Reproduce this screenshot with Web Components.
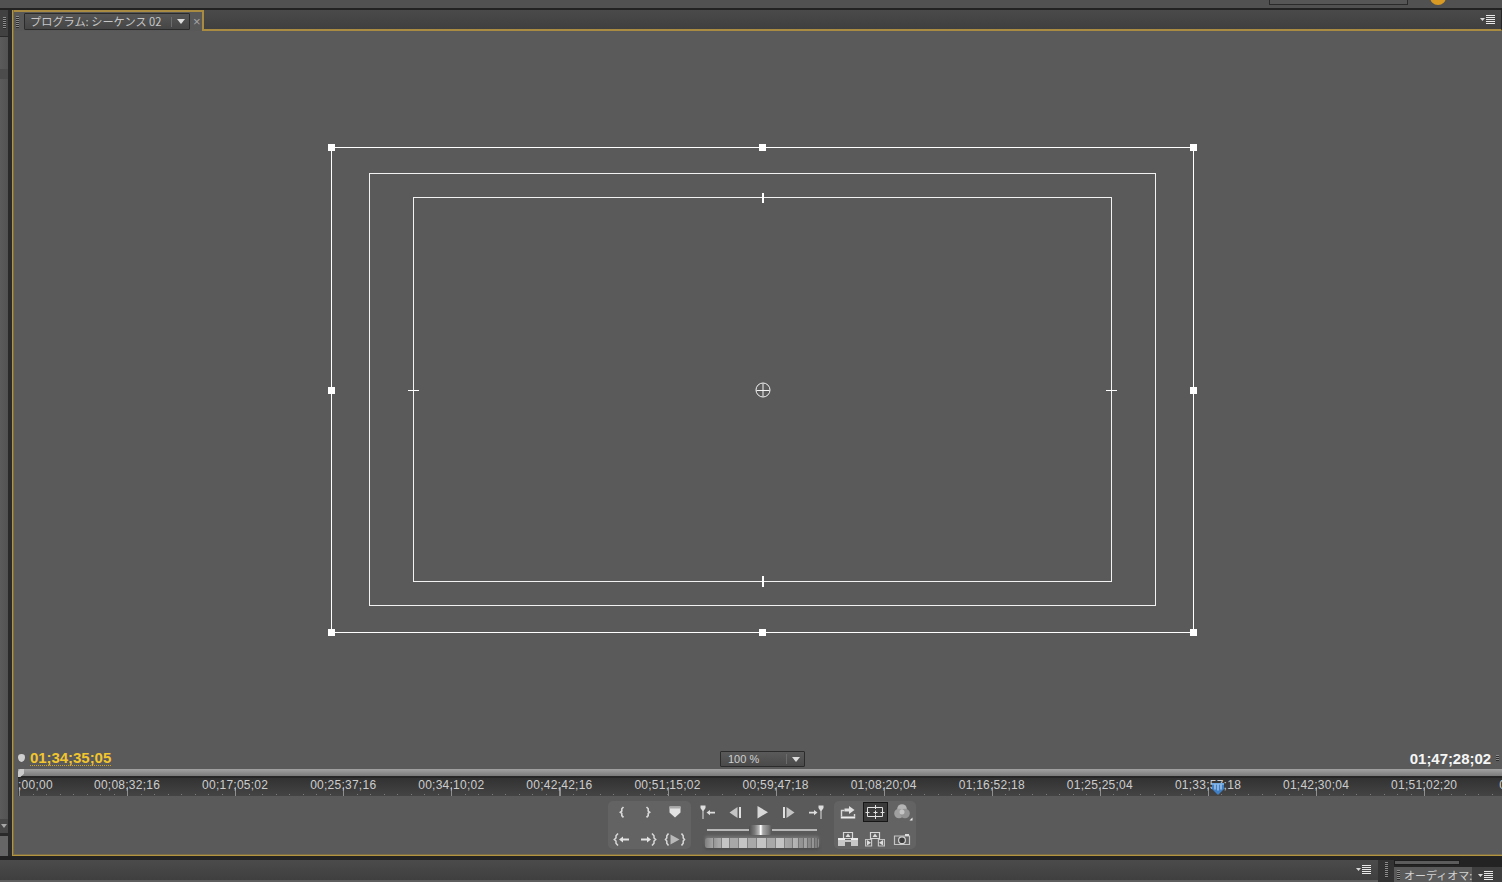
<!DOCTYPE html>
<html lang="ja">
<head>
<meta charset="utf-8">
<title>プログラム: シーケンス 02</title>
<style>
  html, body { margin: 0; padding: 0; background: #232323; overflow: hidden; }
</style>
</head>
<body>
<pr-app></pr-app>

<script>
const ICONS = {
  'mark-in': '<path d="M11.500 5 9.800 6.800V9L8.300 10.200 9.800 11.400v2.200l1.700 1.800" fill="none" stroke="#d8d8d8" stroke-width="1.600"/>',
  'mark-out': '<path d="M8.500 5l1.700 1.800V9l1.500 1.200-1.500 1.200v2.200l-1.700 1.800" fill="none" stroke="#d8d8d8" stroke-width="1.600"/>',
  'marker': '<path d="M4.500 4.500h11v6L10 15.500l-5.500-5z" fill="#e2e2e2"/><path d="M4.500 4.500h11v2h-11z" fill="#a8a8a8"/>',
  'go-in': '<path d="M2.500 3.500h5v2.500L5.500 9v8H4.500V9L2.500 6z" fill="#ddd"/><path d="M8.500 10.500 12 8v1.700h5v1.800h-5v1.700z" fill="#ddd"/>',
  'step-back': '<path d="M12.500 5v11L4.500 10.500z" fill="#c4c4c4"/><path d="M14 5h2v11h-2z" fill="#e0e0e0"/>',
  'play': '<path d="M5.500 4v12.500L16 10.200z" fill="#d8d8d8"/>',
  'step-fwd': '<path d="M7.500 5v11l8-5.500z" fill="#c4c4c4"/><path d="M4 5h2v11H4z" fill="#e0e0e0"/>',
  'go-out': '<path d="M17.500 3.500h-5v2.500l2 3v8h1V9l2-3z" fill="#ddd"/><path d="M11.500 10.500 8 8v1.700H3v1.800h5v1.700z" fill="#ddd"/>',
  'clear-in': '<path d="M6 4.500 4 6.800V9L2.300 10.500 4 12v2.200L6 16.500" fill="none" stroke="#d8d8d8" stroke-width="1.500"/><path d="M7 10.500 11 7.500v2h6v2h-6v2z" fill="#e2e2e2"/>',
  'clear-out': '<path d="M14 4.500l2 2.300V9l1.700 1.500L16 12v2.200l-2 2.300" fill="none" stroke="#d8d8d8" stroke-width="1.500"/><path d="M13 10.500 9 7.500v2H3v2h6v2z" fill="#e2e2e2"/>',
  'play-io': '<path d="M3.500 4.500 1.800 6.800V9L.5 10.500 1.800 12v2.200l1.700 2.300M16.500 4.500l1.700 2.300V9l1.300 1.500-1.300 1.500v2.200l-1.700 2.300" fill="none" stroke="#d8d8d8" stroke-width="1.500"/><path d="M5.500 5.500v10l9-5z" fill="#b8b8b8"/>',
  'loop': '<path d="M3.500 14.500V8.500h3M16.500 12v2.500" fill="none" stroke="#d8d8d8" stroke-width="1.400"/><path d="M6.500 6.500h4.500V4l5.500 4-5.500 4V9.500H6.500z" fill="#e0e0e0"/><path d="M2.800 14.500h14.400v2H2.800z" fill="#eee"/>',
  'safe': '<path d="M2.500 5.500h15v9h-15z" fill="none" stroke="#e2e2e2"/><path d="M10.500 3v4M10.500 13v4M.5 10.500h4M15.500 10.500h4M8.500 10.500h4M10.500 8.500v4" fill="none" stroke="#e2e2e2"/>',
  'output': '<circle cx="10" cy="7" r="4.800" fill="#b4b4b4"/><circle cx="7" cy="11.500" r="4.800" fill="#a0a0a0"/><circle cx="13" cy="11.500" r="4.800" fill="#949494"/><circle cx="10" cy="10" r="2.500" fill="#c4c4c4"/><path d="M20.500 15.500v3h-3z" fill="#eee"/>',
  'lift': '<path d="M5.500 3.500h9v6h-9z" fill="none" stroke="#d8d8d8" stroke-width="1.200"/><path d="M10 4.500 12.500 8h-5z" fill="#ddd"/><path d="M0 9h7v2h6V9h7v8h-7v-4H7v4H0z" fill="#c8c8c8"/><path d="M0 9h7v2H0zM13 9h7v2h-7z" fill="#ececec"/>',
  'extract': '<path d="M5.500 3.500h9v6h-9z" fill="none" stroke="#d8d8d8" stroke-width="1.200"/><path d="M10 4.500 12.500 8h-5z" fill="#ddd"/><path d="M.6 10.500h6v6.500h-6zM13.400 10.500h6v6.500h-6z" fill="none" stroke="#c4c4c4" stroke-width="1.200"/><path d="M6 13.700 2 11v5.500zM14 13.700l4-2.700v5.500z" fill="#ddd"/>',
  'camera': '<path d="M2.500 7h15v8.500h-15z" fill="none" stroke="#c4c4c4" stroke-width="1.200"/><path d="M13 5h4v2h-4z" fill="#ddd"/><circle cx="10" cy="11.200" r="3.400" fill="#3c3c3c" stroke="#d4d4d4" stroke-width="1.200"/>'
};

class PrIcon extends HTMLElement {
  connectedCallback() {
    const name = this.getAttribute('name');
    this.attachShadow({ mode: 'open' });
    this.shadowRoot.innerHTML = `
      <style>
        :host { display: flex; align-items: center; justify-content: center; width: 20px; height: 20px; justify-self: center; align-self: center; }
        :host([active]) { width: 25px; height: 20px; background: #3a3a3a; border: 1px solid #161616; box-sizing: border-box; }
        svg { display: block; width: 20px; height: 20px; flex: none; overflow: visible; }
      </style>
      <svg viewBox="0 0 20 20">${ICONS[name]}</svg>
    `;
  }
}

class PrMenuIcon extends HTMLElement {
  connectedCallback() {
    this.attachShadow({ mode: 'open' });
    this.shadowRoot.innerHTML = `
      <style>
        :host { display: block; width: 15px; height: 9px; flex: none; }
        svg { display: block; }
      </style>
      <svg width="15" height="9" viewBox="0 0 15 9">
        <path d="M0 3h5L2.500 6z" fill="#d8d8d8"/>
        <path d="M6 .5h9M6 2.500h9M6 4.500h9M6 6.500h9M6 8.500h9" stroke="#e8e8e8" stroke-width="1"/>
      </svg>
    `;
  }
}

class PrGrip extends HTMLElement {
  connectedCallback() {
    this.attachShadow({ mode: 'open' });
    this.shadowRoot.innerHTML = `
      <style>
        :host {
          display: block; width: 3px; height: var(--grip-h, 10px); flex: none;
          background: repeating-linear-gradient(to bottom, #8d8d8d 0 1px, #2c2c2c 1px 2px);
        }
      </style>
    `;
  }
}

class PrDropdown extends HTMLElement {
  connectedCallback() {
    this.attachShadow({ mode: 'open' });
    this.shadowRoot.innerHTML = `
      <style>
        :host {
          display: flex; align-items: center; box-sizing: border-box; height: 16px;
          background: linear-gradient(#5a5a5a, #4a4a4a);
          border: 1px solid #2b2b2b; border-radius: 1px;
          font: 11px "Liberation Sans", "Noto Sans CJK JP", sans-serif;
          color: #cfcfcf;
        }
        .label { flex: 1; white-space: nowrap; overflow: hidden; padding-bottom: var(--label-lift, 0); line-height: 14px; }
        .divider { width: 1px; height: 10px; background: #6c6c6c; }
        .arrow { width: 0; height: 0; border-left: 4px solid transparent; border-right: 4px solid transparent; border-top: 5px solid #dcdcdc; }
      </style>
      <span class="label"><slot></slot></span>
      <span class="divider"></span>
      <span class="arrow"></span>
    `;
  }
}

class PrPanelHeader extends HTMLElement {
  connectedCallback() {
    this.attachShadow({ mode: 'open' });
    this.shadowRoot.innerHTML = `
      <style>
        :host { display: flex; height: 21px; flex: none; background: linear-gradient(#4a4a4a, #3e3e3e); }
        .well {
          display: flex; align-items: center; box-sizing: border-box; width: 190px;
          background: #585858; border-top: 2px solid #a98c42; border-right: 2px solid #a98c42;
          padding-left: 2px; gap: 5px;
        }
        pr-grip { --grip-h: 12px; }
        pr-dropdown {
          width: 166px; height: 17px; padding: 0 4px 0 5px; gap: 5px; --label-lift: 2px;
          font-family: "Noto Sans CJK JP", "Liberation Sans", sans-serif;
          font-size: 11.2px; color: #c6c6c6;
          background: linear-gradient(#565656, #454545);
        }
        .close { font: 13px "Liberation Sans", sans-serif; color: #a4a4a4; margin-left: -2px; line-height: 1; }
        .rest {
          flex: 1; display: flex; align-items: center; justify-content: flex-end;
          box-sizing: border-box; border-bottom: 2px solid #a98c42;
          border-right: 1px solid #262626; padding-right: 6px;
        }
      </style>
      <div class="well">
        <pr-grip></pr-grip>
        <pr-dropdown><slot></slot></pr-dropdown>
        <span class="close">×</span>
      </div>
      <div class="rest"><pr-menu-icon></pr-menu-icon></div>
    `;
  }
}

// safe area guides, drawn in the coordinates of the monitor canvas
class PrSafeFrame extends HTMLElement {
  connectedCallback() {
    const handles = [];
    for (const x of [331, 762, 1193]) {
      for (const y of [147, 390, 632]) {
        if (x === 762 && y === 390) continue;
        handles.push(`<rect x="${x - 3}" y="${y - 3}" width="7" height="7" fill="#fff" stroke="none"/>`);
      }
    }
    this.attachShadow({ mode: 'open' });
    this.shadowRoot.innerHTML = `
      <style>
        :host { display: block; width: 880px; height: 500px; flex: none; }
        svg { display: block; }
      </style>
      <svg width="880" height="500" viewBox="323 140 880 500" fill="none" stroke="#f2f2f2" stroke-width="1">
        <rect x="331.500" y="147.500" width="862" height="485" stroke="#fff"/>
        <rect x="369.500" y="173.500" width="786" height="432"/>
        <rect x="413.500" y="197.500" width="698" height="384"/>
        <path d="M763 193v10M763 576v11" stroke-width="2" stroke="#fff"/>
        <path d="M408 390.500h11M1106 390.500h11" stroke="#fff"/>
        <circle cx="763" cy="390" r="7"/>
        <path d="M763 383.500v13M756.500 390.500h13"/>
        ${handles.join('')}
      </svg>
    `;
  }
}

class PrRuler extends HTMLElement {
  connectedCallback() {
    const labels = (this.getAttribute('labels') || '').split(' ');
    this.attachShadow({ mode: 'open' });
    this.shadowRoot.innerHTML = `
      <style>
        :host { display: block; flex: none; margin-left: 4px; position: relative; overflow: hidden; }
        .bar { height: 7px; background: linear-gradient(#a2a2a2, #7a7a7a); border-bottom: 2px solid #262626; }
        .handle { position: absolute; left: 0; top: 0; width: 6px; height: 8px; background: #c9c9c9; clip-path: polygon(30% 0, 100% 0, 100% 60%, 40% 100%, 0 100%, 0 30%); }
        .scale {
          height: 18px; position: relative;
          background:
            repeating-linear-gradient(to right, #8f8f8f 0 1px, transparent 1px 108.1px) 1px 9px / 100% 9px no-repeat,
            repeating-linear-gradient(to right, #7c7c7c 0 1px, transparent 1px 13.51px) 1px 16px / 100% 1px no-repeat,
            linear-gradient(#323232, #444);
        }
        .labels {
          display: flex; white-space: nowrap;
          font: 12px/14px "Liberation Sans", sans-serif; letter-spacing: .25px; color: #cdcdcd;
        }
        .labels span { flex: none; width: 108.1px; text-align: center; }
        .labels span:first-child { width: 55px; text-align: left; }
        .labels span:last-child { text-align: left; padding-left: 21px; box-sizing: border-box; }
        .cti { position: absolute; left: 1194px; top: 5px; }
      </style>
      <div class="bar"></div>
      <div class="handle"></div>
      <div class="scale">
        <div class="labels">${labels.map(t => `<span>${t}</span>`).join('')}</div>
        <svg class="cti" width="12" height="12" viewBox="0 0 12 12">
          <path d="M0 0h12v6L6 12 0 6z" fill="#3f7fc6"/>
          <path d="M0 0h12v2H0z" fill="#6fa6de"/>
          <path d="M3 1.500v5M6 1.500v6M9 1.500v5" stroke="#d6e6f8" stroke-width="1"/>
        </svg>
      </div>
    `;
  }
}

class PrTransport extends HTMLElement {
  connectedCallback() {
    // shuttle cells get narrower towards the right of the strip
    const cells = [9, 8, 8, 9, 9, 9, 10, 9, 9, 8, 6, 5, 4, 4, 3, 3, 3, 3, 3];
    let x = 0;
    const stops = cells.map((w, i) => {
      const c = i % 2 ? '#a8a8a8' : '#c4c4c4';
      const s = `${c} ${x}px ${x + w - 1}px, #808080 ${x + w - 1}px ${x + w}px`;
      x += w;
      return s;
    }).join(', ');
    this.attachShadow({ mode: 'open' });
    this.shadowRoot.innerHTML = `
      <style>
        :host { display: flex; justify-content: center; flex: none; height: 58px; box-sizing: border-box; padding: 5px 0 0 8px; background: #5a5a5a; }
        .group { display: grid; height: 48px; box-sizing: border-box; background: #636363; border-radius: 5px; grid-template-rows: 22px 20px; row-gap: 6px; }
        .left { width: 83px; grid-template-columns: 27px 26px 27px; }
        .right { width: 82px; grid-template-columns: 27px 28px 25px; }
        .center { width: 143px; box-sizing: border-box; padding-right: 1px; display: flex; flex-direction: column; align-items: center; }
        .steps { display: grid; grid-template-columns: repeat(5, 27px); height: 22px; align-items: center; }
        .jog { position: relative; width: 110px; height: 2px; margin-top: 6px; background: #b8b8b8; }
        .thumb {
          position: absolute; left: 42px; top: -4px; width: 23px; height: 10px; border-radius: 3px;
          background: linear-gradient(to right, #4e4e4e, #7c7c7c 25%, #bdbdbd 45%, #fff 48%, #fff 52%, #a8a8a8 60%, #7c7c7c 85%, #555);
        }
        .shuttle {
          width: 114px; height: 10px; margin-top: 7px; border-radius: 2px;
          box-shadow: 0 -2px 3px #747474, 0 2px 3px #4c4c4c;
          background:
            linear-gradient(to right, rgba(70,70,70,.55), rgba(70,70,70,0) 12%, rgba(70,70,70,0) 70%, rgba(70,70,70,.45)),
            linear-gradient(to right, ${stops});
        }
      </style>
      <div class="group left">
        <pr-icon name="mark-in"></pr-icon>
        <pr-icon name="mark-out"></pr-icon>
        <pr-icon name="marker"></pr-icon>
        <pr-icon name="clear-in"></pr-icon>
        <pr-icon name="clear-out"></pr-icon>
        <pr-icon name="play-io"></pr-icon>
      </div>
      <div class="center">
        <div class="steps">
          <pr-icon name="go-in"></pr-icon>
          <pr-icon name="step-back"></pr-icon>
          <pr-icon name="play"></pr-icon>
          <pr-icon name="step-fwd"></pr-icon>
          <pr-icon name="go-out"></pr-icon>
        </div>
        <div class="jog"><div class="thumb"></div></div>
        <div class="shuttle"></div>
      </div>
      <div class="group right">
        <pr-icon name="loop"></pr-icon>
        <pr-icon name="safe" active></pr-icon>
        <pr-icon name="output"></pr-icon>
        <pr-icon name="lift"></pr-icon>
        <pr-icon name="extract"></pr-icon>
        <pr-icon name="camera"></pr-icon>
      </div>
    `;
  }
}

class PrProgramPanel extends HTMLElement {
  connectedCallback() {
    this.attachShadow({ mode: 'open' });
    this.shadowRoot.innerHTML = `
      <style>
        :host {
          display: flex; flex-direction: column; flex: 1; min-width: 0; box-sizing: border-box;
          background: #5a5a5a; padding: 0 0 1px 1px;
          border-left: 1px solid #b3953f; border-bottom: 1px solid #b3953f;
          box-shadow: inset 1px 0 0 #7b6e4c, inset 0 -1px 0 #7b6e4c;
        }
        .monitor { flex: 1; min-height: 0; display: flex; align-items: center; justify-content: center; padding-left: 10px; }
        .times { display: grid; grid-template-columns: 706px 85px 1fr; height: 20px; flex: none; align-items: center; }
        .current { display: flex; align-items: center; gap: 5px; padding: 0 0 2px 4px; }
        .pin { width: 7px; height: 8px; background: #cfcfcf; border-radius: 50% 50% 50% 50% / 40% 40% 60% 60%; }
        .tc { font: bold 15px "Liberation Sans", sans-serif; letter-spacing: -.05px; }
        .tc.now { color: #f2c52e; border-bottom: 1px dotted #c9a02a; line-height: 15px; }
        .tc.end { color: #f6f6f6; }
        .duration { display: flex; align-items: center; justify-content: flex-end; gap: 5px; padding: 0 3px 2px 0; }
        pr-dropdown { padding: 0 4px 0 7px; gap: 5px; }
        pr-grip { --grip-h: 6px; }
      </style>
      <pr-panel-header>プログラム: シーケンス 02</pr-panel-header>
      <div class="monitor"><pr-safe-frame></pr-safe-frame></div>
      <div class="times">
        <div class="current"><span class="pin"></span><span class="tc now">01;34;35;05</span></div>
        <pr-dropdown>100 %</pr-dropdown>
        <div class="duration"><span class="tc end">01;47;28;02</span><pr-grip></pr-grip></div>
      </div>
      <pr-ruler labels=";00;00 00;08;32;16 00;17;05;02 00;25;37;16 00;34;10;02 00;42;42;16 00;51;15;02 00;59;47;18 01;08;20;04 01;16;52;18 01;25;25;04 01;33;57;18 01;42;30;04 01;51;02;20 0"></pr-ruler>
      <pr-transport></pr-transport>
    `;
  }
}

class PrLeftRail extends HTMLElement {
  connectedCallback() {
    this.attachShadow({ mode: 'open' });
    this.shadowRoot.innerHTML = `
      <style>
        :host { display: flex; flex-direction: column; width: 12px; flex: none; box-sizing: border-box; border-right: 4px solid #2a2a2a; background: #565656; }
        .top { height: 26px; background: #414141; display: flex; justify-content: center; align-items: center; border-bottom: 1px solid #2a2a2a; }
        .fill { flex: 1; background: linear-gradient(to right, #5b5b5b, #535353); }
        .notch { height: 10px; margin-top: 32px; background: #4c4c4c; }
        .arrow { height: 14px; background: #484848; border-bottom: 3px solid #2a2a2a; display: flex; justify-content: center; align-items: center; }
        .arrow span { width: 0; height: 0; border-left: 3px solid transparent; border-right: 3px solid transparent; border-top: 4px solid #a8a8a8; }
        .foot { height: 20px; background: #666; }
        pr-grip { --grip-h: 12px; }
      </style>
      <div class="top"><pr-grip></pr-grip></div>
      <div class="fill"><div class="notch"></div></div>
      <div class="arrow"><span></span></div>
      <div class="foot"></div>
    `;
  }
}

class PrBottomBar extends HTMLElement {
  connectedCallback() {
    this.attachShadow({ mode: 'open' });
    this.shadowRoot.innerHTML = `
      <style>
        :host { display: flex; height: 26px; flex: none; background: #232323; padding-top: 4px; box-sizing: border-box; }
        .strip {
          flex: 1; display: flex; align-items: flex-start; justify-content: flex-end; box-sizing: border-box;
          padding: 5px 7px 0 0; background: linear-gradient(#4b4b4b, #3f3f3f); border-bottom: 2px solid #5e5e5e;
        }
        .sash { width: 16px; display: flex; justify-content: center; padding-top: 2px; background: #333; box-sizing: border-box; }
        .sash pr-grip { --grip-h: 16px; }
        .audio { width: 108px; display: flex; flex-direction: column; }
        .mini { width: 66px; height: 5px; background: #5c5c5c; box-sizing: border-box; border: 1px solid #1d1d1d; flex: none; }
        .tabs { flex: 1; display: flex; align-items: center; margin-top: 2px; background: #3f3f3f; }
        .tab {
          width: 78px; height: 100%; display: flex; align-items: center; gap: 4px; padding-left: 3px; box-sizing: border-box; overflow: hidden;
          background: #5a5a5a; white-space: nowrap; color: #d2d2d2;
          font: 11px "Noto Sans CJK JP", "Liberation Sans", sans-serif;
        }
        .tabs pr-menu-icon { margin-left: 6px; }
        .tab pr-grip { --grip-h: 10px; }
      </style>
      <div class="strip"><pr-menu-icon></pr-menu-icon></div>
      <div class="sash"><pr-grip></pr-grip></div>
      <div class="audio">
        <div class="mini"></div>
        <div class="tabs">
          <div class="tab"><pr-grip></pr-grip>オーディオマ:</div>
          <pr-menu-icon></pr-menu-icon>
        </div>
      </div>
    `;
  }
}

class PrApp extends HTMLElement {
  connectedCallback() {
    this.attachShadow({ mode: 'open' });
    this.shadowRoot.innerHTML = `
      <style>
        :host { display: flex; flex-direction: column; width: 1502px; height: 882px; overflow: hidden; background: #232323; }
        .top { height: 10px; box-sizing: border-box; flex: none; display: flex; background: #515151; border-bottom: 2px solid #222; overflow: hidden; }
        .field { width: 139px; height: 5px; margin-left: 1269px; box-sizing: border-box; border: 1px solid #2a2a2a; border-top: none; background: #565656; }
        .dot { width: 16px; height: 16px; margin: -11px 0 0 22px; border-radius: 50%; background: #d89a22; }
        .main { flex: 1; min-height: 0; display: flex; }
      </style>
      <div class="top"><div class="field"></div><div class="dot"></div></div>
      <div class="main">
        <pr-left-rail></pr-left-rail>
        <pr-program-panel></pr-program-panel>
      </div>
      <pr-bottom-bar></pr-bottom-bar>
    `;
  }
}

customElements.define('pr-icon', PrIcon);
customElements.define('pr-menu-icon', PrMenuIcon);
customElements.define('pr-grip', PrGrip);
customElements.define('pr-dropdown', PrDropdown);
customElements.define('pr-panel-header', PrPanelHeader);
customElements.define('pr-safe-frame', PrSafeFrame);
customElements.define('pr-ruler', PrRuler);
customElements.define('pr-transport', PrTransport);
customElements.define('pr-program-panel', PrProgramPanel);
customElements.define('pr-left-rail', PrLeftRail);
customElements.define('pr-bottom-bar', PrBottomBar);
customElements.define('pr-app', PrApp);
</script>
</body>
</html>
